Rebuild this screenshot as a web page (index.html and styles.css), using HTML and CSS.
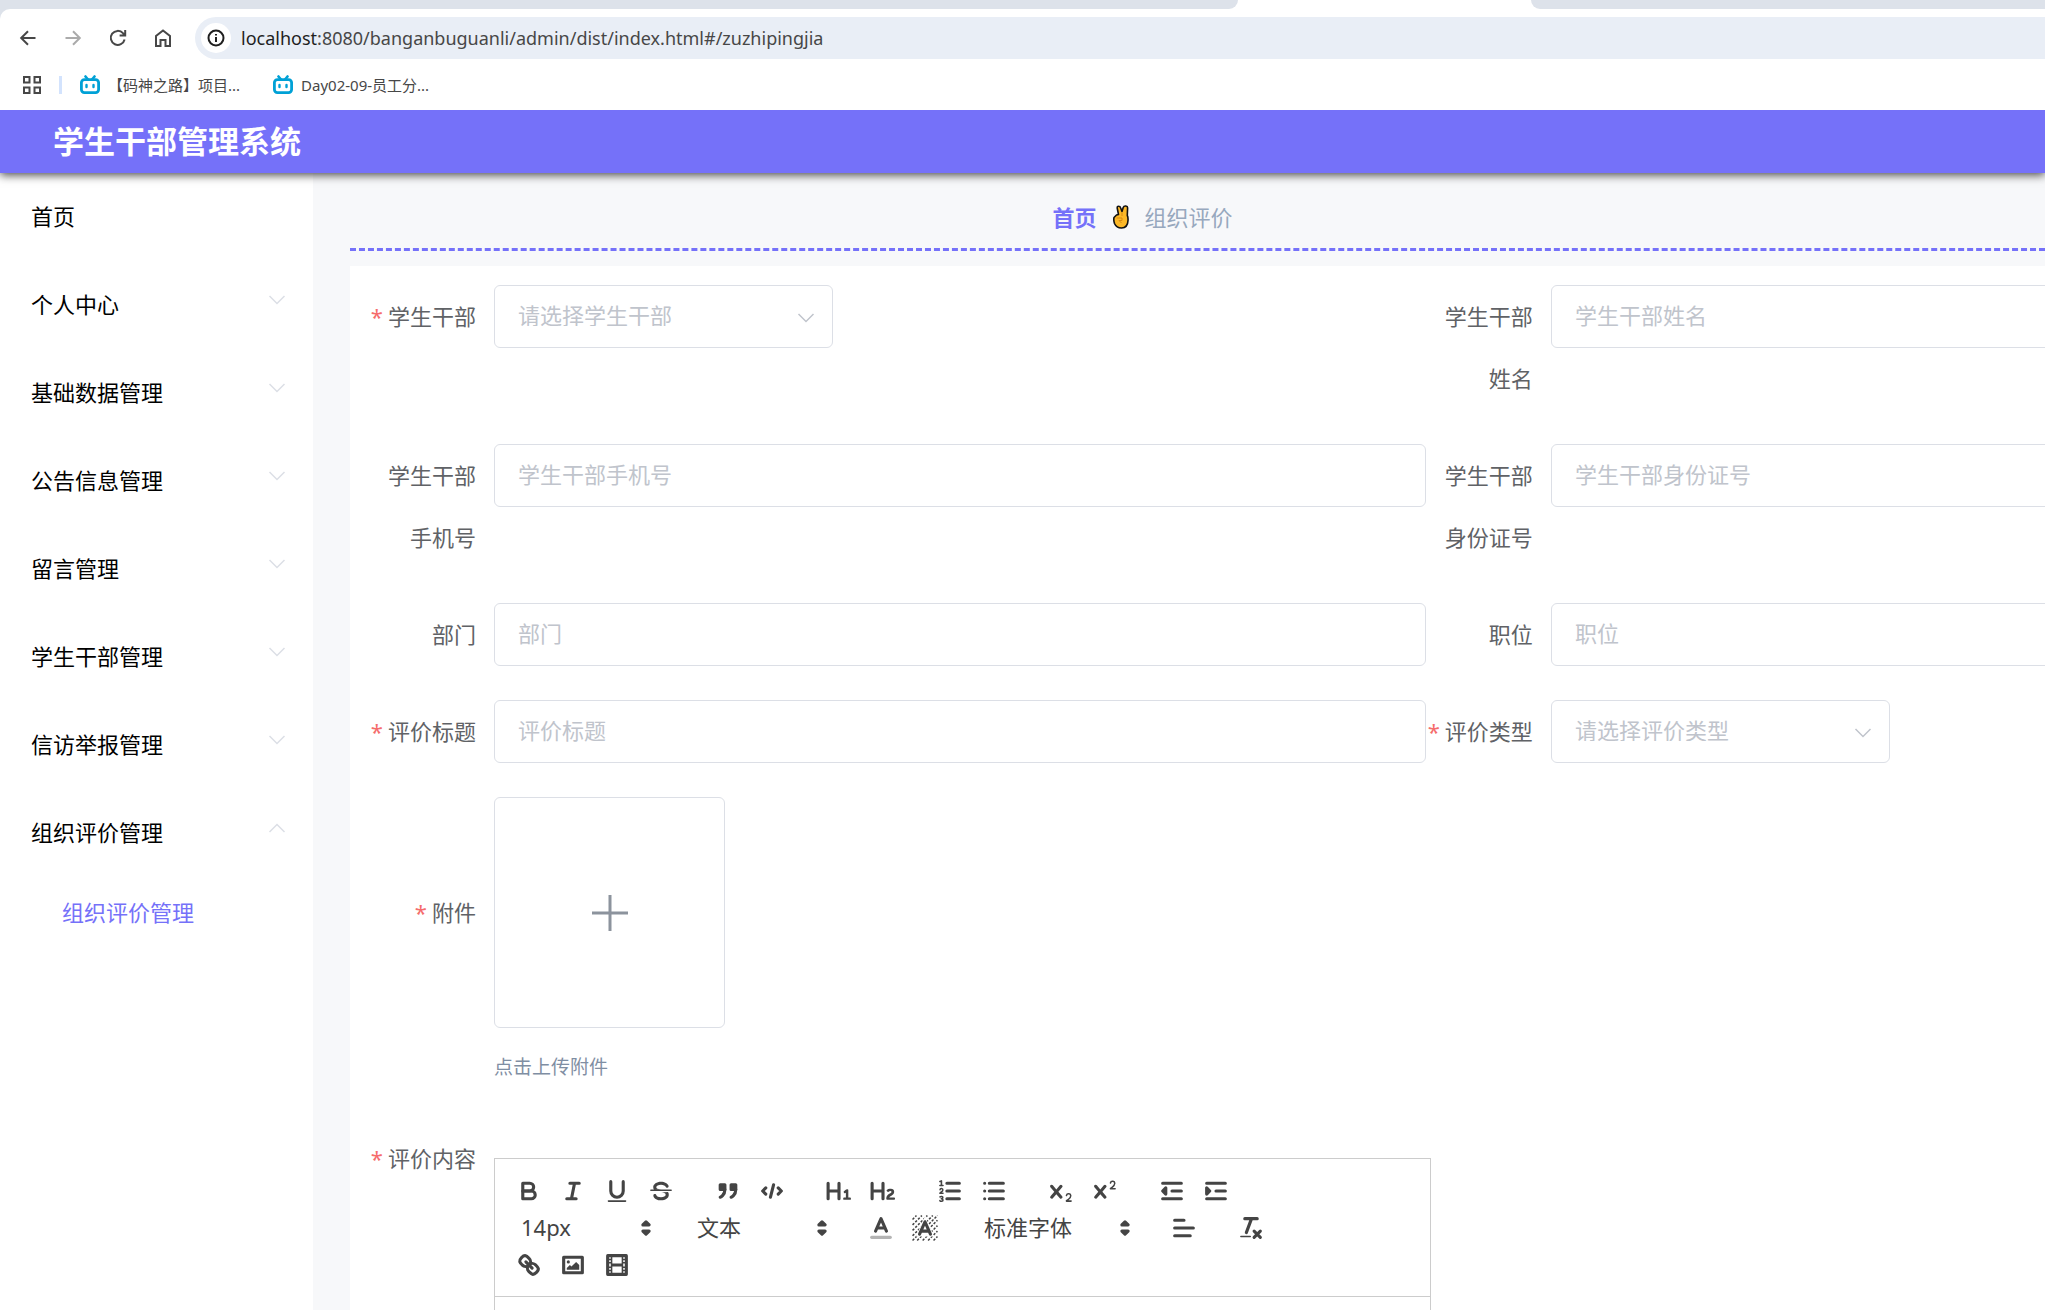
FILE: index.html
```html
<!DOCTYPE html>
<html lang="zh-CN">
<head>
<meta charset="utf-8">
<title>学生干部管理系统</title>
<link rel="stylesheet" href="styles.css">
</head>
<body>
<svg class="defs" aria-hidden="true">
  <symbol id="down" viewBox="0 0 18 10"><path d="M1.5 1 9 8.500 16.500 1"/></symbol>
  <symbol id="sort" viewBox="0 0 18 18"><polygon points="7 11 9 13 11 11"/><polygon points="7 7 9 5 11 7"/></symbol>
  <symbol id="bili" viewBox="0 0 20 20"><path d="M5.500 1.500 8 4.500M14.500 1.500 12 4.500" stroke-width="2.600"/><rect x="1.400" y="4.600" width="17.200" height="13" rx="3" stroke-width="2.800"/><path d="M6.500 10v2M13.500 10v2" stroke-width="2.400"/></symbol>
</svg>

<div class="browser">
  <div class="tabs"><div class="tab-gap first"></div><div class="tab-gap last"></div></div>
  <div class="toolbar">
    <button class="nav" aria-label="后退"><svg viewBox="0 0 18 18"><path d="M16.500 9H2.500M9 2.200 2.200 9 9 15.800"/></svg></button>
    <button class="nav off" aria-label="前进"><svg viewBox="0 0 18 18"><path d="M1.500 9h14M9 2.200 15.800 9 9 15.800"/></svg></button>
    <button class="nav" aria-label="刷新"><svg viewBox="0 0 18 18"><path d="M15.600 10.500A7 7 0 1 1 14 4.200L16 6.200M16.200 1v5.600h-5.600"/></svg></button>
    <button class="nav" aria-label="主页"><svg viewBox="0 0 18 18"><path d="M2 17V7l7-5.500L16 7v10h-4.500v-6h-5v6z"/></svg></button>
    <div class="address">
      <button class="info" aria-label="网站信息"><svg viewBox="0 0 18 18"><circle cx="9" cy="9" r="7.500"/><path d="M9 8v5M9 5v1.600"/></svg></button>
      <span class="url"><b>localhost</b>:8080/banganbuguanli/admin/dist/index.html#/zuzhipingjia</span>
    </div>
  </div>
  <div class="bookmarks">
    <button class="apps" aria-label="应用"><svg viewBox="0 0 18 18"><path d="M1 1h5.500v5.500H1zM11.500 1H17v5.500h-5.500zM1 11.500h5.500V17H1zM11.500 11.500H17V17h-5.500z"/></svg></button>
    <a class="mark" href="#"><svg class="bili"><use href="#bili"/></svg>【码神之路】项目...</a>
    <a class="mark" href="#"><svg class="bili"><use href="#bili"/></svg>Day02-09-员工分...</a>
  </div>
</div>

<header class="header"><h1>学生干部管理系统</h1></header>

<div class="body">
  <nav class="sidebar">
    <a href="#">首页</a>
    <a href="#">个人中心<svg><use href="#down"/></svg></a>
    <a href="#">基础数据管理<svg><use href="#down"/></svg></a>
    <a href="#">公告信息管理<svg><use href="#down"/></svg></a>
    <a href="#">留言管理<svg><use href="#down"/></svg></a>
    <a href="#">学生干部管理<svg><use href="#down"/></svg></a>
    <a href="#">信访举报管理<svg><use href="#down"/></svg></a>
    <a href="#">组织评价管理<svg class="up"><use href="#down"/></svg></a>
    <a href="#" class="sub">组织评价管理</a>
  </nav>

  <main class="main">
    <div class="crumbs">
      <a href="#">首页</a>
      <svg viewBox="0 0 16 24" aria-hidden="true"><path d="M1 12.500 3.500 10 5.500 9.500 4.200 3Q4.200 1 5.700 1.200 7.200 1.200 7.700 3L9 6.500 10.200 2.500Q10.800 .8 12.800 1 14.700 1.200 14.600 3L14.300 10.500Q15.200 12 15 15.500 14.800 22.800 8.500 23 3.500 23 1.500 18.500 .4 15 1 12.500z" fill="#fcb827" stroke="#111" stroke-width="1.600" stroke-linejoin="round"/><path d="M3.500 13h5.500v2.500H6l2.500 2.500M9 8v3" fill="none" stroke="#d98a12" stroke-width="1"/></svg>
      <span>组织评价</span>
    </div>

    <form class="form">
      <div class="item">
        <label class="req" for="cadre">学生干部</label>
        <div class="select"><select id="cadre"><option>请选择学生干部</option></select><svg><use href="#down"/></svg></div>
      </div>
      <div class="item"><label for="name">学生干部姓名</label><input id="name" placeholder="学生干部姓名"></div>
      <div class="item"><label for="phone">学生干部手机号</label><input id="phone" placeholder="学生干部手机号"></div>
      <div class="item"><label for="idno">学生干部身份证号</label><input id="idno" placeholder="学生干部身份证号"></div>
      <div class="item"><label for="dept">部门</label><input id="dept" placeholder="部门"></div>
      <div class="item"><label for="post">职位</label><input id="post" placeholder="职位"></div>
      <div class="item"><label class="req" for="title">评价标题</label><input id="title" placeholder="评价标题"></div>
      <div class="item">
        <label class="req" for="type">评价类型</label>
        <div class="select"><select id="type"><option>请选择评价类型</option></select><svg><use href="#down"/></svg></div>
      </div>
      <div class="item wide">
        <label class="req tall" for="file">附件</label>
        <div>
          <button type="button" class="upload" id="file" aria-label="上传附件"><svg viewBox="0 0 36 36"><path d="M18 0v36M0 18h36"/></svg></button>
          <p class="tip">点击上传附件</p>
        </div>
      </div>
      <div class="item">
        <label class="req" for="content">评价内容</label>
        <div class="editor">
          <div class="tools">
            <div class="row">
              <div class="group">
                <button type="button" aria-label="粗体"><svg viewBox="0 0 18 18"><path class="s" d="M5,4H9.500A2.500,2.500,0,0,1,12,6.500v0A2.500,2.500,0,0,1,9.500,9H5A0,0,0,0,1,5,9V4A0,0,0,0,1,5,4Z"/><path class="s" d="M5,9h5.500A2.500,2.500,0,0,1,13,11.500v0A2.500,2.500,0,0,1,10.500,14H5a0,0,0,0,1,0,0V9A0,0,0,0,1,5,9Z"/></svg></button>
                <button type="button" aria-label="斜体"><svg viewBox="0 0 18 18"><path class="s" d="M7 4h6M5 14h6M8 14l2-10"/></svg></button>
                <button type="button" aria-label="下划线"><svg viewBox="0 0 18 18"><path class="s" d="M5,3V9a4.012,4.012,0,0,0,4,4H9a4.012,4.012,0,0,0,4-4V3"/><rect class="f" height="1" rx="0.500" width="12" x="3" y="15"/></svg></button>
                <button type="button" aria-label="删除线"><svg viewBox="0 0 18 18"><path class="s t" d="M15.500 8.500h-13"/><path class="f" d="M9.007,8C6.542,7.791,6,7.519,6,6.500,6,5.792,7.283,5,9,5c1.571,0,2.765.679,2.969,1.309a1,1,0,0,0,1.900-.617C13.356,4.106,11.354,3,9,3,6.200,3,4,4.538,4,6.500a3.200,3.200,0,0,0,.5,1.843Z"/><path class="f" d="M8.984,10C11.457,10.208,12,10.479,12,11.500c0,0.708-1.283,1.500-3,1.500-1.571,0-2.765-.679-2.969-1.309a1,1,0,1,0-1.900.617C4.644,13.894,6.646,15,9,15c2.800,0,5-1.538,5-3.500a3.200,3.200,0,0,0-.5-1.843Z"/></svg></button>
              </div>
              <div class="group">
                <button type="button" aria-label="引用"><svg viewBox="0 0 18 18"><rect class="f s solid" height="3" width="3" x="4" y="5"/><rect class="f s solid" height="3" width="3" x="11" y="5"/><path class="s solid" d="M7,8c0,4.031-3,5-3,5"/><path class="s solid" d="M14,8c0,4.031-3,5-3,5"/></svg></button>
                <button type="button" aria-label="代码"><svg viewBox="0 0 18 18"><path class="s" d="M5 7 3 9 5 11M13 7 15 9 13 11M10 5 8 13"/></svg></button>
              </div>
              <div class="group">
                <button type="button" aria-label="标题一"><svg viewBox="0 0 18 18"><path class="f" d="M10,4V14a1,1,0,0,1-2,0V10H3v4a1,1,0,0,1-2,0V4A1,1,0,0,1,3,4V8H8V4a1,1,0,0,1,2,0Zm6.068,9.209H14.988V8.507a.59.590,0,0,0-.605-.627H14.100a1.117,1.117,0,0,0-.748.300L12.150,9.178a.609.609,0,0,0,0,.860l.2.200a.6.600,0,0,0,.814.033l.26-.2v3.137H12.300a.6.600,0,0,0-.605.616v.260a.6.600,0,0,0,.605.616h3.772a.6.600,0,0,0,.605-.616v-.260A.6.600,0,0,0,16.068,13.209Z"/></svg></button>
                <button type="button" aria-label="标题二"><svg viewBox="0 0 18 18"><path class="f" d="M16.740,13.819v.217a.6.600,0,0,1-.638.605H11.767a.6.600,0,0,1-.657-.605V13.700c0-2.820,3.360-3.320,3.360-4.100a.73.730,0,0,0-.8-.65,1.180,1.180,0,0,0-.820.450.594.594,0,0,1-.880.120l-.4-.34a.566.566,0,0,1-.1-.850A2.700,2.700,0,0,1,13.760,7.530a2.070,2.070,0,0,1,2.440,1.950c0,2.200-3,2.800-3.130,3.740h3.030A.6.600,0,0,1,16.740,13.819ZM9,3A.99974.99974,0,0,0,8,4V8H3V4A1,1,0,0,0,1,4V14a1,1,0,0,0,2,0V10H8v4a1,1,0,0,0,2,0V4A.99974.99974,0,0,0,9,3Z"/></svg></button>
              </div>
              <div class="group">
                <button type="button" aria-label="有序列表"><svg viewBox="0 0 18 18"><path class="s" d="M7 4h8M7 9h8M7 14h8"/><path class="s t" d="M2.500 5.500h2M2.500 2.900 3.500 2.500v3"/><path class="s t" d="M4.500 10.500h-2c0-.6 1.900-1.100 1.900-2.200a.9.900 0 0 0-1.800-.1M2.600 12.800c.5-.5 1.800-.4 1.800.4 0 .6-.4.800-1 .8.600 0 1.100.2 1.100.8 0 1-1.500 1-2 .4"/></svg></button>
                <button type="button" aria-label="无序列表"><svg viewBox="0 0 18 18"><path class="s" d="M6 4h9M6 9h9M6 14h9M3 4h0M3 9h0M3 14h0"/></svg></button>
              </div>
              <div class="group">
                <button type="button" aria-label="下标"><svg viewBox="0 0 18 18"><path class="f" d="M15.500,15H13.861a3.858,3.858,0,0,0,1.914-2.975,1.800,1.800,0,0,0-1.600-1.751A1.921,1.921,0,0,0,12.021,11.700a.50013.50013,0,1,0,.957.291h0a.914.914,0,0,1,1.053-.725.810.810,0,0,1,.744.762c0,1.076-1.169,1.869-2.240,2.600C12.300,14.790,12,15,12,15.500a.5.500,0,0,0,.5.500h3a.5.500,0,0,0,0-1Z"/><path class="f" d="M9.650,5.241a1,1,0,0,0-1.409.108L6,7.964,3.759,5.349A1,1,0,0,0,2.192,6.592L4.683,9.500,2.241,12.349a1,1,0,0,0,1.518,1.300L6,11.036,8.241,13.650a1,1,0,0,0,1.518-1.300L7.317,9.500,9.759,6.651A1,1,0,0,0,9.650,5.241Z"/></svg></button>
                <button type="button" aria-label="上标"><svg viewBox="0 0 18 18"><path class="f" d="M15.500,7H13.861a4.015,4.015,0,0,0,1.914-2.975,1.800,1.800,0,0,0-1.600-1.751A1.922,1.922,0,0,0,12.021,3.700a.5.500,0,1,0,.957.291.917.917,0,0,1,1.053-.725.810.810,0,0,1,.744.762c0,1.077-1.164,1.925-1.934,2.486C12.360,6.848,12,7.100,12,7.500a.5.500,0,0,0,.5.500h3a.5.500,0,0,0,0-1Z"/><path class="f" d="M9.650,5.241a1,1,0,0,0-1.409.108L6,7.964,3.759,5.349A1,1,0,0,0,2.192,6.592L4.683,9.500,2.241,12.349a1,1,0,0,0,1.518,1.300L6,11.036,8.241,13.650a1,1,0,0,0,1.518-1.300L7.317,9.500,9.759,6.651A1,1,0,0,0,9.650,5.241Z"/></svg></button>
              </div>
              <div class="group">
                <button type="button" aria-label="减少缩进"><svg viewBox="0 0 18 18"><path class="s" d="M3 14h12M3 4h12M9 9h6"/><polygon class="s solid" points="5 7 5 11 3 9"/></svg></button>
                <button type="button" aria-label="增加缩进"><svg viewBox="0 0 18 18"><path class="s" d="M3 14h12M3 4h12M9 9h6"/><polygon class="s solid" points="3 7 3 11 5 9"/></svg></button>
              </div>
            </div>
            <div class="row">
              <div class="group"><div class="picker"><select aria-label="字号"><option>14px</option></select><svg><use href="#sort"/></svg></div></div>
              <div class="group"><div class="picker"><select aria-label="段落"><option>文本</option></select><svg><use href="#sort"/></svg></div></div>
              <div class="group">
                <button type="button" aria-label="文字颜色"><svg viewBox="0 0 18 18"><path class="s pale" d="M3 15h12"/><path class="s" d="M5.500 11 9 3 12.500 11M11.630 9H6.380"/></svg></button>
                <button type="button" aria-label="背景颜色"><svg viewBox="0 0 18 18"><path class="s hatch" d="M1 3.500 3.500 1M1 7 7 1M1 10.500 10.500 1M1 14 14 1M1 17 17 1M4 17 17 4M7.500 17 17 7.500M11 17 17 11M14.500 17 17 14.500"/><path class="halo" d="M5.500 13 9 5 12.500 13z"/><path class="s" d="M5.500 13 9 5 12.500 13M11.630 11H6.380"/></svg></button>
              </div>
              <div class="group"><div class="picker font"><select aria-label="字体"><option>标准字体</option></select><svg><use href="#sort"/></svg></div></div>
              <div class="group"><button type="button" aria-label="对齐"><svg viewBox="0 0 18 18"><path class="s" d="M3 9h12M3 14h10M3 4h6"/></svg></button></div>
              <div class="group"><button type="button" aria-label="清除格式"><svg viewBox="0 0 18 18"><path class="s" d="M5 3h8M6 12 9.350 3M11 11l4 4M15 11l-4 4"/><rect class="f" height="1" rx="0.500" width="7" x="2" y="14"/></svg></button></div>
            </div>
            <div class="row">
              <div class="group">
                <button type="button" aria-label="链接"><svg viewBox="0 0 18 18"><path class="s" d="M7 7l4 4"/><path class="s" d="M8.900,4.577a3.476,3.476,0,0,1,.360,4.679A3.476,3.476,0,0,1,4.577,8.900C3.185,7.500,2.035,6.400,4.217,4.217S7.500,3.185,8.900,4.577Z"/><path class="s" d="M13.423,9.100a3.476,3.476,0,0,0-4.679-.360,3.476,3.476,0,0,0,.360,4.679c1.392,1.392,2.500,2.542,4.679.360S14.815,10.500,13.423,9.100Z"/></svg></button>
                <button type="button" aria-label="图片"><svg viewBox="0 0 18 18"><rect class="s" height="10" width="12" x="3" y="4"/><circle class="f" cx="6" cy="7" r="1"/><polyline class="f" points="5 12 5 11 7 9 8 10 11 7 13 9 13 12 5 12"/></svg></button>
                <button type="button" aria-label="视频"><svg viewBox="0 0 18 18"><rect class="s" height="12" width="12" x="3" y="3"/><path class="f" d="M5 3h1v12H5zM12 3h1v12h-1zM5 8h8v2H5zM3 5h3v1H3zM3 7h3v1H3zM3 10h3v1H3zM3 12h3v1H3zM12 5h3v1h-3zM12 7h3v1h-3zM12 10h3v1h-3zM12 12h3v1h-3z"/></svg></button>
              </div>
            </div>
          </div>
          <textarea id="content"></textarea>
        </div>
      </div>
    </form>
  </main>
</div>
</body>
</html>
```
FILE: styles.css
```css
* { box-sizing: border-box; }
html { height: 100%; overflow: hidden; }
body {
  margin: 0;
  height: 100%;
  display: flex;
  flex-direction: column;
  overflow: hidden;
  background: #fff;
  color: #606266;
  font: 22px/1 "Noto Sans", "Noto Sans CJK SC", sans-serif;
}
button, input, select, textarea { font: inherit; color: inherit; border: 0; margin: 0; padding: 0; background: none; }
a { color: inherit; text-decoration: none; }
.defs { position: absolute; width: 0; height: 0; }

/* browser frame */
.browser { flex: none; position: relative; z-index: 2; background: #dde2ea; }
.tabs { display: flex; justify-content: space-between; height: 9px; background: #fff; }
.tab-gap { background: #dde2ea; }
.tab-gap.first { width: 1238px; border-bottom-right-radius: 12px; }
.tab-gap.last { flex: 1; margin-left: 293px; border-bottom-left-radius: 12px; }
.toolbar { display: flex; align-items: center; height: 58px; padding: 0 0 0 5px; background: #fff; border-top-left-radius: 10px; }
.nav { width: 45px; height: 42px; display: grid; place-items: center; color: #474747; }
.nav svg { width: 18px; height: 18px; fill: none; stroke: currentColor; stroke-width: 2; }
.nav.off { color: #ababab; }
.address { flex: 1; display: flex; align-items: center; height: 42px; margin-left: 10px; padding-left: 6px; background: #e9eef6; border-radius: 21px 0 0 21px; }
.info { width: 30px; height: 30px; display: grid; place-items: center; background: #fff; border-radius: 50%; color: #1f1f1f; }
.info svg { width: 18px; height: 18px; fill: none; stroke: currentColor; stroke-width: 2; }
.url { margin-left: 10px; font-size: 18px; color: #474747; }
.url b { font-weight: 400; color: #1f1f1f; }
.bookmarks { display: flex; align-items: center; height: 43px; padding: 0 0 7px 23px; background: #fff; color: #474747; font-size: 15px; }
.apps { height: 18px; padding-right: 18px; margin-right: 18px; border-right: 3px solid #d3e3fd; }
.apps svg { display: block; width: 18px; height: 18px; fill: none; stroke: #474747; stroke-width: 2; }
.mark { display: flex; align-items: center; gap: 8px; margin-right: 33px; }
.bili { width: 20px; height: 20px; fill: none; stroke: #00a1d6; stroke-linecap: round; }

/* application */
.header { flex: none; position: relative; z-index: 1; display: flex; align-items: center; height: 63px; padding-left: 53px; background: #7571f9; box-shadow: 0 2px 9px #444; color: #fff; }
.header h1 { margin: 0; font-size: 31px; font-weight: 700; }
.body { flex: 1; min-height: 0; display: flex; overflow: hidden; }
.sidebar { flex: none; width: 313px; margin-top: -1px; padding: 0 27px 0 31px; color: #000; background: #fff; }
.sidebar a { display: flex; justify-content: space-between; align-items: center; height: 88px; }
.sidebar svg { width: 18px; height: 10px; margin-bottom: 8px; fill: none; stroke: #dcdfe6; stroke-width: 1.5; }
.sidebar .up { transform: rotate(180deg); }
.sidebar .sub { height: 72px; padding-left: 31px; color: #7571f9; }
.main { flex: 1; min-width: 0; padding-left: 37px; background: #f7f8fa; overflow: hidden; }
.crumbs { display: flex; justify-content: center; align-items: center; gap: 16px; height: 78px; padding: 13px 110px 0 0; border-bottom: 3px dashed #7571f9; color: #97a8be; }
.crumbs a { font-weight: 700; color: #7571f9; }
.crumbs svg { width: 16px; height: 24px; }

.form { display: grid; grid-template-columns: calc(63% + 1px) 63%; row-gap: 35px; margin-top: 15px; padding: 19px 0 0 19px; background: #fff; }
.item { display: grid; grid-template-columns: 125px minmax(0, 1fr); align-items: start; }
.item.wide { grid-column: 1 / -1; }
label { padding-right: 18px; line-height: 62px; text-align: right; }
label.tall { line-height: 231px; }
.req::before { content: "*"; margin-right: 5px; color: #f56c6c; }
.item > input, .select select { width: 100%; height: 63px; padding: 0 23px 3px; border: 1px solid #dcdfe6; border-radius: 6px; background: #fff; }
.item > input { margin-bottom: -1px; }
.item > input::placeholder { color: #c0c4cc; opacity: 1; }
.select { display: grid; align-items: center; width: 339px; margin-bottom: -1px; }
.select > *, .picker > * { grid-area: 1 / 1; }
.select select { appearance: none; color: #c0c4cc; }
.select svg { justify-self: end; width: 18px; height: 10px; margin: 3px 18px 0 0; fill: none; stroke: #c0c4cc; stroke-width: 1.5; pointer-events: none; }
.upload { display: grid; place-items: center; width: 231px; height: 231px; border: 1px solid #dcdfe6; border-radius: 6px; }
.upload svg { width: 36px; height: 36px; stroke: #8c939d; stroke-width: 3; }
.tip { margin: 14px 0 0; font-size: 19px; line-height: 50px; color: #7f8ea3; }

.editor { margin: 31px -5px 0 0; border: 1px solid #ccc; color: #444; }
.tools { padding: 13px 12px; border-bottom: 1px solid #ccc; }
.row { display: flex; gap: 23px; height: 37px; }
.group { display: flex; align-items: center; }
.group button { width: 44px; height: 37px; display: grid; place-items: center; }
.group svg { display: block; width: 28px; height: 28px; }
.s { fill: none; stroke: #444; stroke-width: 2; stroke-linecap: round; stroke-linejoin: round; }
.f, .solid { fill: #444; }
.t { stroke-width: 1; }
.pale { opacity: .4; }
.hatch { stroke-width: 1; stroke-linecap: butt; stroke-dasharray: 1.5 1; }
.halo { fill: #fff; stroke: #fff; stroke-width: 3; }
.picker { display: grid; align-items: center; width: 153px; }
.picker.font { width: 169px; }
.picker select { appearance: none; width: 100%; height: 37px; padding: 0 0 2px 14px; line-height: 34px; }
.picker svg { justify-self: end; fill: #444; stroke: #444; stroke-width: 2; stroke-linejoin: round; pointer-events: none; }
textarea { display: block; width: 100%; height: 300px; resize: none; }
```
